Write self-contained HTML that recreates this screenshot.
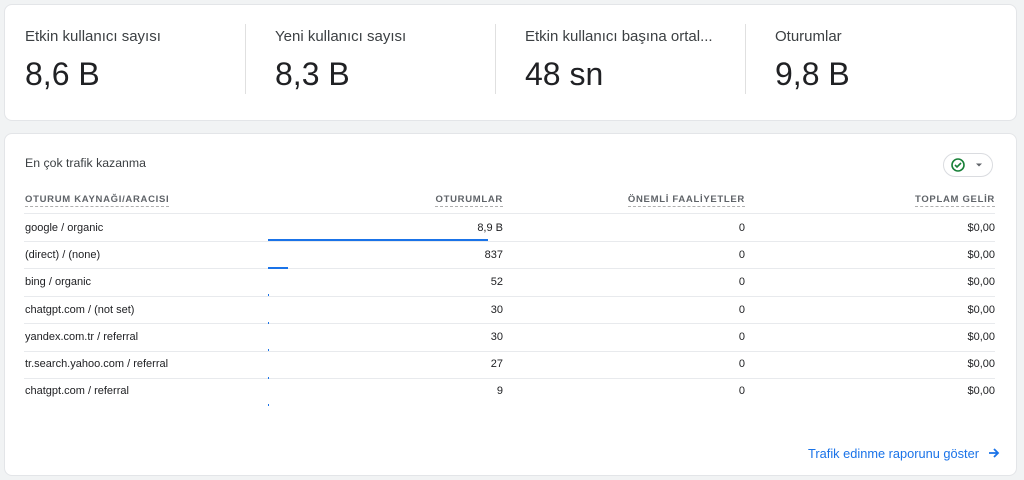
<!DOCTYPE html>
<html><head><meta charset="utf-8"><style>
body{margin:0;width:1024px;height:480px;background:#f1f3f4;font-family:"Liberation Sans",Roboto,sans-serif;position:relative;overflow:hidden}
.card{position:absolute;background:#fff;border:1px solid #e3e5e8;border-radius:8px}
.m{position:absolute;top:0}
.m .l{position:absolute;top:28px;font-size:15px;color:#3c4043;white-space:nowrap}
.m .v{position:absolute;top:56px;font-size:32px;color:#202124;white-space:nowrap}
.sep{position:absolute;top:24px;width:1px;height:70px;background:#e0e0e0}
.t{position:absolute;font-size:11px;color:#202124;white-space:nowrap}
.h{position:absolute;top:194px;font-size:9.5px;font-weight:bold;letter-spacing:0.7px;color:#5f6368;border-bottom:1px dashed #b0b0b0;padding-bottom:1px}
.line{position:absolute;left:24px;width:971px;height:1px;background:#e8eaed}
.r{text-align:right}
.bar{position:absolute;left:268px;height:2px;background:#1a73e8}
</style></head><body>
<div class="card" style="left:4px;top:4px;width:1011px;height:115px"></div>
<div class="m" style="left:25px"><div class="l">Etkin kullanıcı sayısı</div><div class="v">8,6 B</div></div>
<div class="sep" style="left:245px"></div>
<div class="m" style="left:275px"><div class="l">Yeni kullanıcı sayısı</div><div class="v">8,3 B</div></div>
<div class="sep" style="left:495px"></div>
<div class="m" style="left:525px"><div class="l">Etkin kullanıcı başına ortal...</div><div class="v">48 sn</div></div>
<div class="sep" style="left:745px"></div>
<div class="m" style="left:775px"><div class="l">Oturumlar</div><div class="v">9,8 B</div></div>

<div class="card" style="left:4px;top:133px;width:1011px;height:341px"></div>
<div class="t" style="left:25px;top:156px;font-size:12.3px;color:#3c4043">En çok trafik kazanma</div>
<div style="position:absolute;left:943px;top:153px;width:50px;height:24px;border:1px solid #dadce0;border-radius:13px;box-sizing:border-box">
<svg width="50" height="24" style="position:absolute;left:-1px;top:-1px"><circle cx="15" cy="12" r="6" fill="none" stroke="#188038" stroke-width="1.6"/><path d="M12 12l2 2 4-4" fill="none" stroke="#188038" stroke-width="1.6"/><path d="M33 10.5h6l-3 3z" fill="#5f6368"/></svg></div>
<div class="h" style="left:25px">OTURUM KAYNAĞI/ARACISI</div>
<div class="h" style="right:521px">OTURUMLAR</div>
<div class="h" style="right:279px">ÖNEMLİ FAALİYETLER</div>
<div class="h" style="right:29px">TOPLAM GELİR</div>
<div class="line" style="top:213px"></div>
<div class="line" style="top:241px"></div>
<div class="line" style="top:268px"></div>
<div class="line" style="top:296px"></div>
<div class="line" style="top:323px"></div>
<div class="line" style="top:351px"></div>
<div class="line" style="top:378px"></div>
<div class="bar" style="top:239px;width:220px"></div>
<div class="bar" style="top:267px;width:20px"></div>
<div class="bar" style="top:294px;width:1px"></div>
<div class="bar" style="top:322px;width:1px"></div>
<div class="bar" style="top:349px;width:1px"></div>
<div class="bar" style="top:377px;width:1px"></div>
<div class="bar" style="top:404px;width:1px"></div>
<div class="t" style="left:25px;top:222px">google / organic</div><div class="t r" style="right:521px;top:222px">8,9 B</div><div class="t" style="right:279px;top:222px">0</div><div class="t" style="right:29px;top:222px">$0,00</div>
<div class="t" style="left:25px;top:249px">(direct) / (none)</div><div class="t" style="right:521px;top:249px">837</div><div class="t" style="right:279px;top:249px">0</div><div class="t" style="right:29px;top:249px">$0,00</div>
<div class="t" style="left:25px;top:276px">bing / organic</div><div class="t" style="right:521px;top:276px">52</div><div class="t" style="right:279px;top:276px">0</div><div class="t" style="right:29px;top:276px">$0,00</div>
<div class="t" style="left:25px;top:304px">chatgpt.com / (not set)</div><div class="t" style="right:521px;top:304px">30</div><div class="t" style="right:279px;top:304px">0</div><div class="t" style="right:29px;top:304px">$0,00</div>
<div class="t" style="left:25px;top:331px">yandex.com.tr / referral</div><div class="t" style="right:521px;top:331px">30</div><div class="t" style="right:279px;top:331px">0</div><div class="t" style="right:29px;top:331px">$0,00</div>
<div class="t" style="left:25px;top:358px">tr.search.yahoo.com / referral</div><div class="t" style="right:521px;top:358px">27</div><div class="t" style="right:279px;top:358px">0</div><div class="t" style="right:29px;top:358px">$0,00</div>
<div class="t" style="left:25px;top:385px">chatgpt.com / referral</div><div class="t" style="right:521px;top:385px">9</div><div class="t" style="right:279px;top:385px">0</div><div class="t" style="right:29px;top:385px">$0,00</div>
<div class="t" style="right:45px;top:446px;font-size:12.8px;color:#1a73e8">Trafik edinme raporunu göster</div>
<svg width="14" height="14" style="position:absolute;left:987px;top:446px"><path d="M2 7h9M7 3l4 4-4 4" fill="none" stroke="#1a73e8" stroke-width="1.8"/></svg>
</body></html>
